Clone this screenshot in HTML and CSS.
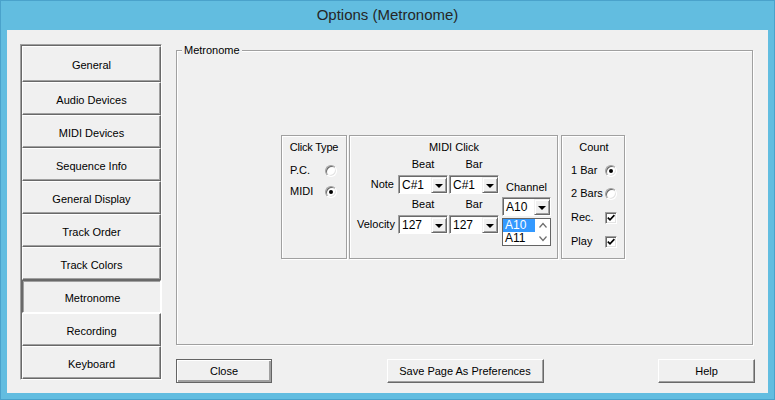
FILE: index.html
```html
<!DOCTYPE html>
<html lang="en">

<head>
    <meta charset="UTF-8">
    <title>Options (Metronome)</title>
    <link rel="stylesheet" href="styles.css">
</head>

<body>
    <div class="window">
        <div class="titlebar">Options (Metronome)</div>
        <div class="client">
            <div class="nav">
                <div class="nav-btn first">General</div>
                <div class="nav-btn">Audio Devices</div>
                <div class="nav-btn">MIDI Devices</div>
                <div class="nav-btn">Sequence Info</div>
                <div class="nav-btn">General Display</div>
                <div class="nav-btn">Track Order</div>
                <div class="nav-btn">Track Colors</div>
                <div class="nav-btn active">Metronome</div>
                <div class="nav-btn">Recording</div>
                <div class="nav-btn">Keyboard</div>
            </div>

            <div class="main">
                <div class="groupbox">
                    <span class="groupbox-label">Metronome</span>

                    <div class="panels">
                        <!-- click type -->
                        <div class="panel click-type">
                            <div class="panel-title">Click Type</div>
                            <div class="opt-row">
                                <span>P.C.</span>
                                <span class="radio"></span>
                            </div>
                            <div class="opt-row second">
                                <span>MIDI</span>
                                <span class="radio checked"></span>
                            </div>
                        </div>

                        <!-- midi click -->
                        <div class="panel midi-click">
                            <div class="panel-title">MIDI Click</div>
                            <div class="midi-body">
                                <div class="midi-grid">
                                    <span></span>
                                    <span class="col-head">Beat</span>
                                    <span class="col-head">Bar</span>

                                    <span class="row-label">Note</span>
                                    <div class="combo"><span class="combo-text">C#1</span><span class="drop"></span></div>
                                    <div class="combo"><span class="combo-text">C#1</span><span class="drop"></span></div>

                                    <span></span>
                                    <span class="col-head">Beat</span>
                                    <span class="col-head">Bar</span>

                                    <span class="row-label">Velocity</span>
                                    <div class="combo"><span class="combo-text">127</span><span class="drop"></span></div>
                                    <div class="combo"><span class="combo-text">127</span><span class="drop"></span></div>
                                </div>

                                <div class="channel-col">
                                    <span class="channel-label">Channel</span>
                                    <div class="combo"><span class="combo-text">A10</span><span class="drop"></span></div>
                                    <div class="listbox">
                                        <div class="list-items">
                                            <div class="list-item selected">A10</div>
                                            <div class="list-item">A11</div>
                                        </div>
                                        <div class="list-arrows">
                                            <svg width="12" height="26" viewBox="0 0 12 26">
                                                <polyline points="2.5,8.5 6,4.5 9.5,8.5" fill="none" stroke="#6d6d6d" stroke-width="1.2"></polyline>
                                                <polyline points="2.5,17.5 6,21.5 9.5,17.5" fill="none" stroke="#6d6d6d" stroke-width="1.2"></polyline>
                                            </svg>
                                        </div>
                                    </div>
                                </div>
                            </div>
                        </div>

                        <!-- count -->
                        <div class="panel count">
                            <div class="panel-title">Count</div>
                            <div class="opt-row">
                                <span>1 Bar</span>
                                <span class="radio checked"></span>
                            </div>
                            <div class="opt-row">
                                <span>2 Bars</span>
                                <span class="radio"></span>
                            </div>
                            <div class="opt-row wide">
                                <span>Rec.</span>
                                <span class="checkbox"><svg width="8" height="8" viewBox="0 0 8 8"><polyline points="0.8,3.6 3,5.8 7.4,1.2" fill="none" stroke="#000" stroke-width="1.7"></polyline></svg></span>
                            </div>
                            <div class="opt-row wide">
                                <span>Play</span>
                                <span class="checkbox"><svg width="8" height="8" viewBox="0 0 8 8"><polyline points="0.8,3.6 3,5.8 7.4,1.2" fill="none" stroke="#000" stroke-width="1.7"></polyline></svg></span>
                            </div>
                        </div>
                    </div>
                </div>

                <div class="actions">
                    <div class="btn default close">Close</div>
                    <div class="btn save">Save Page As Preferences</div>
                    <div class="btn help">Help</div>
                </div>
            </div>
        </div>
    </div>
</body>

</html>
```

FILE: styles.css
```css
html,
body {
    margin: 0;
    width: 775px;
    height: 400px;
    overflow: hidden;
}

body {
    font-family: 'Liberation Sans', Arial, sans-serif;
    font-size: 11px;
    color: #000;
}

.window {
    width: 775px;
    height: 400px;
    box-sizing: border-box;
    padding: 0 7px 7px;
    background: #62bde0;
    box-shadow: inset 0 0 0 1px #4aa2cb;
}

.titlebar {
    height: 30px;
    line-height: 30px;
    text-align: center;
    font-size: 15px;
    color: #262626;
}

.client {
    display: flex;
    gap: 14px;
    height: 363px;
    box-sizing: border-box;
    padding: 14px 13px 0;
    background: #f0f0f0;
}

/* left page list */
.nav {
    width: 142px;
    height: 336px;
    box-sizing: border-box;
    border: 1px solid;
    border-color: #a0a0a0 #fff #fff #a0a0a0;
    box-shadow: inset 1px 1px #696969;
    padding: 1px 0 0 1px;
    display: flex;
    flex-direction: column;
}

.nav-btn {
    height: 33px;
    box-sizing: border-box;
    display: flex;
    align-items: center;
    justify-content: center;
    padding-top: 2px;
    border: 1px solid;
    border-color: #fff #696969 #696969 #fff;
    box-shadow: inset -1px -1px #a0a0a0;
}

.nav-btn.first {
    height: 36px;
}

.nav-btn.active {
    border-color: #696969 #fff #fff #696969;
    box-shadow: inset 1px 1px #a0a0a0;
    padding: 3px 0 0 2px;
}

/* right side */
.main {
    width: 579px;
    display: flex;
    flex-direction: column;
}

.groupbox {
    position: relative;
    margin: 6px 2px 0 0;
    height: 295px;
    box-sizing: border-box;
    border: 1px solid #a0a0a0;
    box-shadow: inset 1px 1px #fff, 1px 1px #fff;
    display: flex;
    align-items: center;
    padding-left: 104px;
}

.groupbox-label {
    position: absolute;
    top: -7px;
    left: 5px;
    padding: 0 2px;
    line-height: 13px;
    background: #f0f0f0;
}

.panels {
    display: flex;
    margin-top: -1px;
}

.panel {
    height: 124px;
    box-sizing: border-box;
    border: 1px solid #a0a0a0;
    box-shadow: inset 1px 1px #fff, 1px 1px #fff;
    padding-top: 5px;
}

.panel-title {
    line-height: 13px;
    text-align: center;
    white-space: nowrap;
}

.click-type {
    width: 66px;
    padding-left: 8px;
    padding-right: 9px;
}

.click-type .panel-title {
    margin: 0 -9px 0 -8px;
    letter-spacing: -0.2px;
}

.midi-click {
    width: 209px;
    margin-left: 2px;
    padding-left: 7px;
    padding-right: 6px;
}

.count {
    width: 64px;
    margin-left: 3px;
    padding-left: 9px;
    padding-right: 7px;
}

.opt-row {
    height: 13px;
    line-height: 13px;
    margin-top: 10px;
    display: flex;
    justify-content: space-between;
    align-items: center;
    white-space: nowrap;
}

.click-type .opt-row.second {
    margin-top: 8px;
}

.count .opt-row.wide {
    margin-top: 11px;
}

.radio {
    width: 12px;
    height: 12px;
    box-sizing: border-box;
    border-radius: 50%;
    border: 1px solid;
    border-color: #a0a0a0 #fff #fff #a0a0a0;
    box-shadow: inset 1px 1px #696969, inset -1px -1px #e3e3e3;
    background: #fff;
    position: relative;
}

.radio.checked::after {
    content: "";
    position: absolute;
    left: 3px;
    top: 3px;
    width: 4px;
    height: 4px;
    border-radius: 50%;
    background: #000;
}

.checkbox {
    width: 12px;
    height: 12px;
    box-sizing: border-box;
    border: 1px solid;
    border-color: #a0a0a0 #fff #fff #a0a0a0;
    box-shadow: inset 1px 1px #696969, inset -1px -1px #e3e3e3;
    background: #fff;
    display: flex;
    align-items: center;
    justify-content: center;
}

/* midi click grid */
.midi-body {
    display: flex;
    gap: 3px;
    margin-top: 4px;
}

.midi-grid {
    display: grid;
    grid-template-columns: 40px 50px 50px;
    grid-template-rows: 13px 19px 13px 19px;
    column-gap: 1px;
    row-gap: 4px;
}

.col-head {
    line-height: 13px;
    text-align: center;
}

.row-label {
    align-self: center;
    text-align: right;
    padding-right: 3px;
    line-height: 13px;
}

.combo {
    height: 19px;
    box-sizing: border-box;
    border: 1px solid;
    border-color: #a0a0a0 #fff #fff #a0a0a0;
    box-shadow: inset 1px 1px #696969;
    background: #fff;
    display: flex;
    padding: 1px 0 0 1px;
}

.combo-text {
    flex: 1;
    padding-left: 2px;
    line-height: 16px;
    font-size: 12px;
}

.drop {
    width: 16px;
    box-sizing: border-box;
    border: 1px solid;
    border-color: #f0f0f0 #696969 #696969 #f0f0f0;
    box-shadow: inset 1px 1px #fff, inset -1px -1px #a0a0a0;
    background: #f0f0f0;
    display: flex;
    align-items: center;
    justify-content: center;
}

.drop::after {
    content: "";
    border-left: 4px solid transparent;
    border-right: 4px solid transparent;
    border-top: 4px solid #000;
    margin-top: 1px;
}

.channel-col {
    width: 49px;
    display: flex;
    flex-direction: column;
    padding-top: 23px;
}

.channel-label {
    line-height: 13px;
    text-align: center;
    margin-bottom: 3px;
}

.listbox {
    margin-top: 2px;
    height: 28px;
    box-sizing: border-box;
    border: 1px solid #646464;
    background: #fff;
    display: flex;
}

.list-items {
    width: 32px;
}

.list-item {
    height: 13px;
    line-height: 13px;
    padding-left: 2px;
    font-size: 12px;
}

.list-item.selected {
    background: #3399ff;
    color: #fff;
}

.list-arrows {
    flex: 1;
    display: flex;
    align-items: center;
    justify-content: center;
}

/* bottom buttons */
.actions {
    display: flex;
    justify-content: space-between;
    margin-top: 14px;
}

.btn {
    height: 24px;
    box-sizing: border-box;
    display: flex;
    align-items: center;
    justify-content: center;
    border: 1px solid;
    border-color: #fff #696969 #696969 #fff;
    box-shadow: inset -1px -1px #a0a0a0;
}

.btn.default {
    border-color: #646464;
    box-shadow: inset 1px 1px #fff, inset -2px -2px #a0a0a0;
}

.close {
    width: 96px;
}

.save {
    width: 157px;
}

.help {
    width: 97px;
}
```
